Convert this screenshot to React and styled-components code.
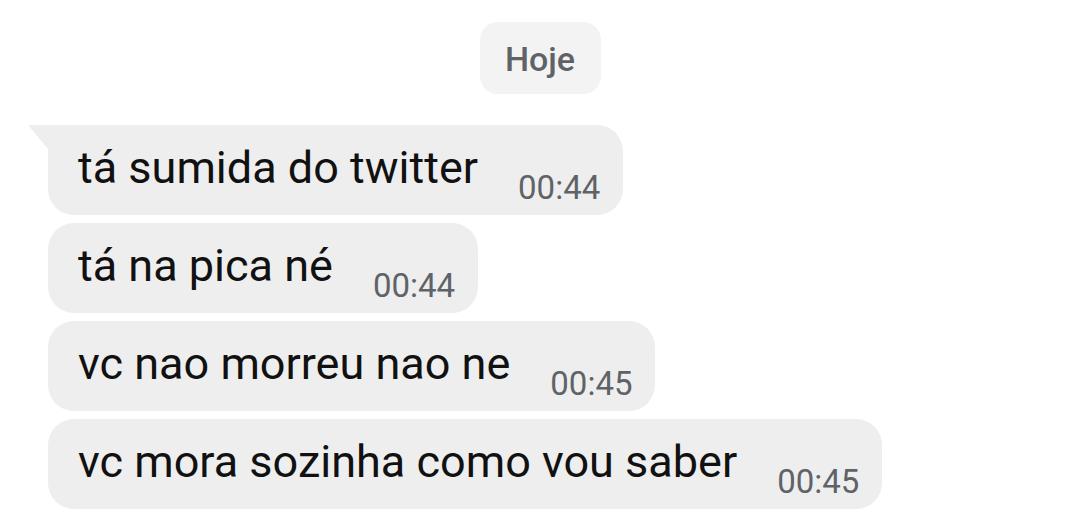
import React from "react";
import styled, { createGlobalStyle } from "styled-components";

const Global = createGlobalStyle`
  html, body {
    margin: 0;
    padding: 0;
    background: #ffffff;
  }
  body {
    font-family: Roboto, "Noto Sans", "Liberation Sans", sans-serif;
  }
`;

const Chat = styled.div`
  width: 1080px;
  height: 526px;
  overflow: hidden;
  display: flex;
  flex-direction: column;
  align-items: flex-start;
  padding: 22px 0 0 48px;
  box-sizing: border-box;
`;

const DayRow = styled.div`
  align-self: stretch;
  display: flex;
  justify-content: center;
  padding-right: 48px;
  margin-bottom: 31px;
`;

const DayChip = styled.div`
  width: 121px;
  height: 72px;
  border-radius: 18px;
  background: #f3f3f3;
  color: #5f6368;
  font-size: 34px;
  font-weight: 500;
  display: flex;
  align-items: center;
  justify-content: center;
  box-sizing: border-box;
  padding-top: 2px;
`;

const Stack = styled.div`
  display: flex;
  flex-direction: column;
  align-items: flex-start;
  gap: 8px;
`;

const Bubble = styled.div`
  position: relative;
  display: flex;
  align-items: flex-end;
  height: 90px;
  box-sizing: border-box;
  padding: 16px 23px 8px 30px;
  background: #eeeeee;
  border-radius: ${(p) => (p.$first ? "0 26px 26px 26px" : "26px")};

  /* speech tail on the first bubble of a group */
  &::before {
    content: "";
    display: ${(p) => (p.$first ? "block" : "none")};
    position: absolute;
    left: -20px;
    top: 0;
    width: 20px;
    height: 24px;
    background: #eeeeee;
    clip-path: polygon(0 0, 100% 0, 100% 100%);
    border-top-left-radius: 3px;
  }
`;

const Text = styled.span`
  font-size: 45px;
  line-height: 53px;
  color: #111111;
  margin-bottom: 13px;
  white-space: nowrap;
`;

const Time = styled.span`
  font-size: 33px;
  line-height: 39px;
  color: #5f6368;
  margin-left: 40px;
  white-space: nowrap;
`;

const messages = [
  { text: "tá sumida do twitter", time: "00:44" },
  { text: "tá na pica né", time: "00:44" },
  { text: "vc nao morreu nao ne", time: "00:45" },
  { text: "vc mora sozinha como vou saber", time: "00:45" },
];

export default function App() {
  return (
    <>
      <Global />
      <Chat>
        <DayRow>
          <DayChip>Hoje</DayChip>
        </DayRow>
        <Stack>
          {messages.map((m, i) => (
            <Bubble key={i} $first={i === 0}>
              <Text>{m.text}</Text>
              <Time>{m.time}</Time>
            </Bubble>
          ))}
        </Stack>
      </Chat>
    </>
  );
}
